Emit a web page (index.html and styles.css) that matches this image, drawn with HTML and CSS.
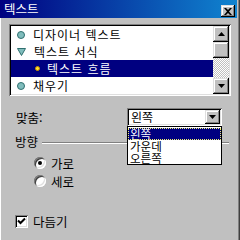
FILE: index.html
```html
<!DOCTYPE html>
<html lang="ko">
<head>
<meta charset="utf-8">
<link rel="stylesheet" href="styles.css">
</head>
<body>
<div class="win">
  <div class="title">
    <span class="title-text">텍스트</span>
    <div class="close raised">
      <svg width="8" height="7" viewBox="0 0 8 7"><path d="M0 0h2l2 2 2-2h2L5 3.5 8 7H6L4 5 2 7H0l3-3.5z" fill="#000"/></svg>
    </div>
  </div>
  <div class="content">
    <div class="list sunken">
      <div class="items">
        <div class="item"><i class="dot"></i>디자이너 텍스트</div>
        <div class="item"><svg class="tri" width="9" height="8" viewBox="0 0 9 8"><path d="M0.5 0.5h8L4.5 7.5z" fill="#7fbcbc" stroke="#2f6f6f"/></svg>텍스트 서식</div>
        <div class="item sub sel"><i class="ydot"></i>텍스트 흐름</div>
        <div class="item"><i class="dot"></i>채우기</div>
      </div>
      <div class="sb">
        <div class="sbtn raised"><svg width="7" height="4" viewBox="0 0 7 4"><path d="M3.5 0L7 4H0z" fill="#000"/></svg></div>
        <div class="thumb raised"></div>
        <div class="track"></div>
        <div class="sbtn raised"><svg width="7" height="4" viewBox="0 0 7 4"><path d="M0 0h7L3.5 4z" fill="#000"/></svg></div>
      </div>
    </div>

    <div class="row">
      <span class="lbl">맞춤:</span>
      <div class="combo sunken">
        <span class="val">왼쪽</span>
        <div class="cbtn raised"><svg width="7" height="4" viewBox="0 0 7 4"><path d="M0 0h7L3.5 4z" fill="#000"/></svg></div>
        <div class="drop">
          <div class="opt hl">왼쪽</div>
          <div class="opt">가운데</div>
          <div class="opt">오른쪽</div>
        </div>
      </div>
    </div>

    <div class="group">
      <span>방향</span>
      <div class="line"></div>
    </div>

    <div class="radio first"><i class="rb on"></i>가로</div>
    <div class="radio"><i class="rb"></i>세로</div>

    <div class="check"><i class="cb"><svg width="9" height="8" viewBox="0 0 9 8"><path d="M1 3.5l2.5 2.5L8 1.5" fill="none" stroke="#000" stroke-width="2"/></svg></i>다듬기</div>
  </div>
</div>
</body>
</html>
```
FILE: styles.css
```css
* { box-sizing: border-box; margin: 0; padding: 0; }

body {
  width: 240px;
  height: 240px;
  overflow: hidden;
  background: #c0c0c0;
  font-family: "Noto Sans CJK KR", "Noto Sans", sans-serif;
  font-size: 12px;
  color: #000;
}

.win {
  width: 240px;
  height: 240px;
  background: #c0c0c0;
  box-shadow: inset 1px 0 #ffffff, inset -1px 0 #404040, inset -2px 0 #808080;
}

.raised {
  background: #c0c0c0;
  box-shadow: inset -1px -1px #000, inset 1px 1px #dfdfdf, inset -2px -2px #808080, inset 2px 2px #fff;
}

.sunken {
  background: #fff;
  box-shadow: inset 1px 1px #808080, inset -1px -1px #fff, inset 2px 2px #000, inset -2px -2px #dfdfdf;
}

.title {
  height: 18px;
  margin-right: 3px;
  padding: 0 2px 0 4px;
  background: linear-gradient(90deg, #000080, #1084d0);
  display: flex;
  justify-content: space-between;
  align-items: flex-start;
  color: #fff;
  line-height: 18px;
  font-size: 12.5px;
}

.close {
  width: 14px;
  height: 12px;
  margin-top: 5px;
  display: flex;
  align-items: center;
  justify-content: center;
}

.content {
  padding: 6px 0 0 9px;
}

.list {
  width: 222px;
  height: 72px;
  padding: 2px;
  display: flex;
}

.items { flex: 1; overflow: hidden; }

.item {
  height: 17px;
  line-height: 17px;
  display: flex;
  align-items: center;
  gap: 8px;
  padding-left: 6px;
  font-size: 12px;
  letter-spacing: 1px;
  white-space: nowrap;
}

.item.sub { padding-left: 24px; gap: 7px; }
.item.sel { background: #000080; color: #fff; }

.dot {
  width: 8px;
  height: 8px;
  border-radius: 50%;
  background: #7fbcbc;
  border: 1px solid #2f6f6f;
  flex: none;
}

.tri { flex: none; }

.ydot {
  width: 5px;
  height: 5px;
  border-radius: 50%;
  background: #ffe030;
  border: 1px solid #c89000;
  flex: none;
}

.sb {
  width: 16px;
  display: flex;
  flex-direction: column;
}

.sbtn {
  height: 16px;
  display: flex;
  align-items: center;
  justify-content: center;
}

.thumb { height: 16px; }

.track {
  flex: 1;
  background-color: #c0c0c0;
  background-image: conic-gradient(#fff 25%, #c0c0c0 0 50%, #fff 0 75%, #c0c0c0 0);
  background-size: 2px 2px;
}

.row {
  display: flex;
  align-items: center;
  height: 18px;
  margin-top: 12px;
  font-size: 12.5px;
}

.lbl {
  width: 118px;
  padding-left: 7px;
}

.combo {
  position: relative;
  width: 95px;
  height: 18px;
  padding: 2px;
  display: flex;
  align-items: center;
  font-size: 12px;
}

.val {
  flex: 1;
  padding-left: 2px;
  line-height: 14px;
}

.cbtn {
  width: 15px;
  height: 14px;
  display: flex;
  align-items: center;
  justify-content: center;
}

.drop {
  position: absolute;
  top: 18px;
  left: 0;
  width: 95px;
  height: 39px;
  background: #fff;
  border: 1px solid #000;
  padding-top: 1px;
  z-index: 2;
}

.opt {
  height: 12px;
  line-height: 12px;
  padding-left: 2px;
  font-size: 11.5px;
}

.opt.hl {
  background: #000080;
  color: #fff;
  outline: 1px dotted #f0f070;
  outline-offset: -1px;
}

.group {
  display: flex;
  align-items: center;
  height: 14px;
  margin-top: 8px;
  padding-left: 6px;
  font-size: 12.5px;
}

.line {
  flex: 1;
  height: 2px;
  margin: 4px 11px 0 4px;
  border-top: 1px solid #808080;
  border-bottom: 1px solid #fff;
}

.radio {
  display: flex;
  align-items: center;
  gap: 5px;
  height: 18px;
  padding-left: 25px;
  font-size: 12.5px;
}

.radio.first { margin-top: 6px; }

.rb {
  position: relative;
  width: 12px;
  height: 12px;
  border-radius: 50%;
  background: #fff;
  box-shadow: inset 1px 1px #808080, inset -1px -1px #fff, inset 2px 2px #404040, inset -2px -2px #dfdfdf;
  flex: none;
}

.rb.on::after {
  content: "";
  position: absolute;
  left: 4px;
  top: 4px;
  width: 4px;
  height: 4px;
  border-radius: 50%;
  background: #000;
}

.check {
  display: flex;
  align-items: center;
  gap: 5px;
  height: 18px;
  margin-top: 22px;
  padding-left: 6px;
  font-size: 12.5px;
}

.cb {
  width: 13px;
  height: 13px;
  background: #fff;
  box-shadow: inset 1px 1px #808080, inset -1px -1px #fff, inset 2px 2px #000, inset -2px -2px #dfdfdf;
  display: flex;
  align-items: center;
  justify-content: center;
  flex: none;
}
```
